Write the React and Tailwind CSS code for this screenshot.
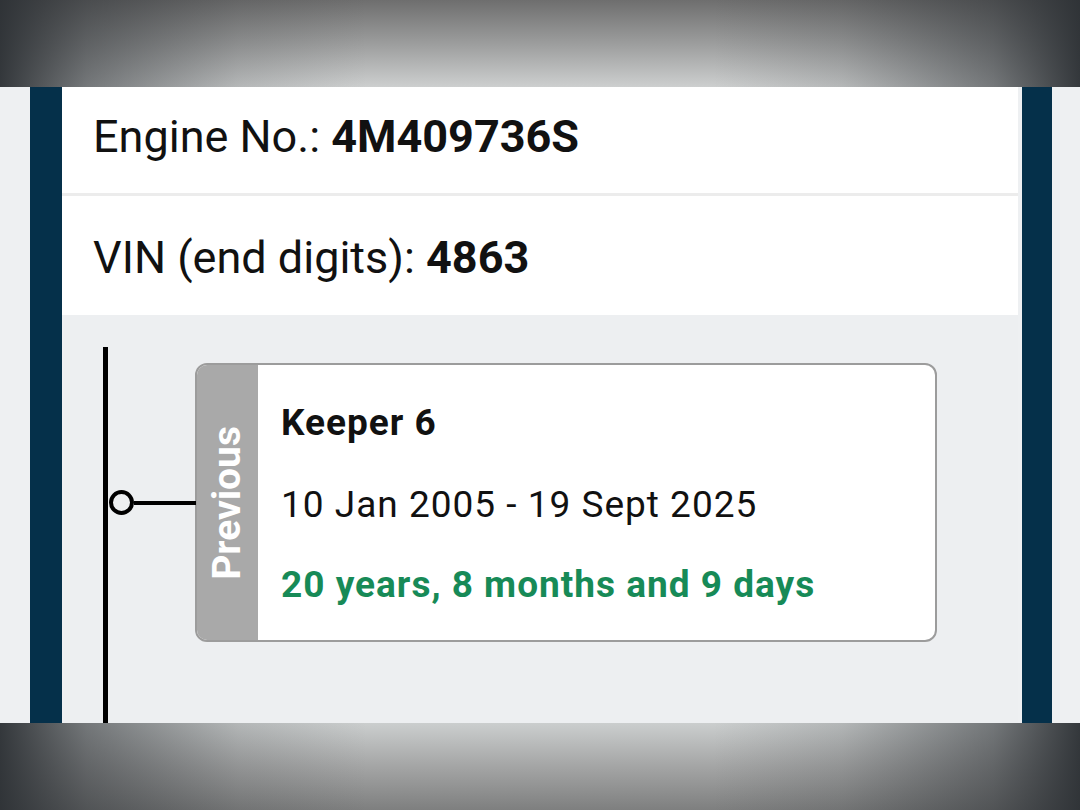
export default function App() {
  return (
    <div className="w-[1080px] h-[810px] flex flex-col overflow-hidden font-['Roboto',sans-serif]">
      {/* top vignette */}
      <div className="h-[87px] bg-[linear-gradient(to_right,rgba(44,48,52,0.95)_0%,rgba(44,48,52,0.55)_8%,rgba(44,48,52,0.15)_22%,rgba(44,48,52,0)_34%,rgba(44,48,52,0)_66%,rgba(44,48,52,0.15)_78%,rgba(44,48,52,0.55)_92%,rgba(44,48,52,0.95)_100%),linear-gradient(to_bottom,#6e6e6e_0%,#9c9d9d_50%,#cdcfcf_100%)]" />

      <div className="h-[636px] flex bg-[#eef0f2]">
        <div className="w-[30px]" />
        <div className="w-[32px] bg-[#05304a]" />

        <div className="w-[956px] flex flex-col">
          <div className="h-[109px] bg-white pl-[31px] pt-[27px] text-[45px] leading-[45px] text-[#111] border-b-[3px] border-[#ececec]">
            <span>Engine No.: </span>
            <span className="font-bold">4M409736S</span>
          </div>
          <div className="h-[119px] bg-white pl-[31px] pt-[39px] text-[45px] leading-[45px] text-[#111]">
            <span>VIN (end digits): </span>
            <span className="font-bold">4863</span>
          </div>

          {/* timeline */}
          <div className="relative flex-1 flex bg-[#edeff1] ml-[2px]">
            <div className="w-[131px] pl-[39px] flex flex-col">
              <div className="mt-[32px] w-[5px] flex-1 bg-black" />
            </div>
            <div className="absolute left-[45px] top-[175px] flex items-center">
              <div className="w-[25px] h-[25px] rounded-full border-[4px] border-black bg-[#edeff1]" />
              <div className="w-[62px] h-[4px] bg-black" />
            </div>

            <div className="mt-[48px] w-[742px] h-[279px] border-2 border-[#9c9c9c] rounded-[12px] overflow-hidden flex bg-white">
              <div className="w-[61px] bg-[#a9a9a9] flex items-center justify-center">
                <span className="[writing-mode:vertical-rl] rotate-180 text-white font-bold text-[39px] leading-none">
                  Previous
                </span>
              </div>
              <div className="flex-1 pl-[23px] pt-[39px] flex flex-col text-[37px] leading-[37px] tracking-[1px]">
                <div className="font-bold text-[#111]">Keeper 6</div>
                <div className="mt-[45px] text-[#111]">10 Jan 2005 - 19 Sept 2025</div>
                <div className="mt-[43px] font-bold text-[#178a57]">20 years, 8 months and 9 days</div>
              </div>
            </div>
          </div>
        </div>

        <div className="w-[4px]" />
        <div className="w-[30px] bg-[#05304a]" />
        <div className="flex-1" />
      </div>

      {/* bottom vignette */}
      <div className="h-[87px] bg-[linear-gradient(to_right,rgba(44,48,52,0.95)_0%,rgba(44,48,52,0.55)_8%,rgba(44,48,52,0.15)_22%,rgba(44,48,52,0)_34%,rgba(44,48,52,0)_66%,rgba(44,48,52,0.15)_78%,rgba(44,48,52,0.55)_92%,rgba(44,48,52,0.95)_100%),linear-gradient(to_bottom,#cbcece_0%,#a4a5a5_50%,#7e7f7f_100%)]" />
    </div>
  );
}
